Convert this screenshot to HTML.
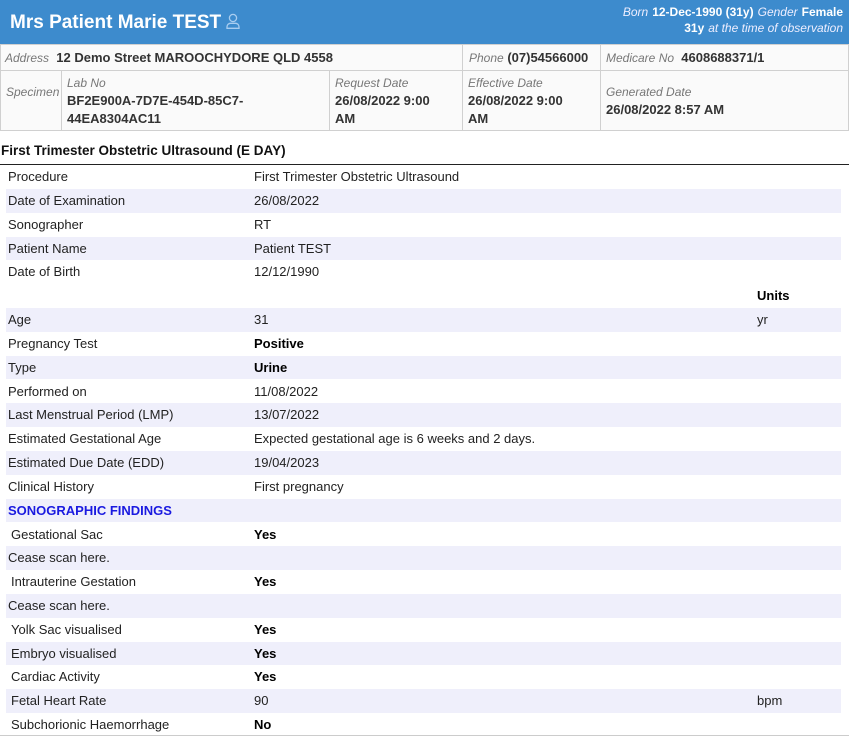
<!DOCTYPE html>
<html><head><meta charset="utf-8"><style>
*{margin:0;padding:0;box-sizing:border-box}
body{width:849px;height:736px;overflow:hidden;background:#fff;font-family:"Liberation Sans",sans-serif;color:#222;font-size:13px;position:relative}
.hdr{position:absolute;left:0;top:0;width:849px;height:44px;background:#3d8bcd;color:#fff}
.name{position:absolute;left:10px;top:12px;font-size:19px;font-weight:bold}
.r1{position:absolute;right:6px;top:4px;font-size:12px;text-align:right;line-height:16px}
.r1 i{font-weight:normal;color:#eef}
.r1 b{margin:0 4px}
.cell{position:absolute;border:1px solid #d0d0d0;background:#fafafa;font-size:13px;color:#333}
.cell i{color:#777;font-size:12px}
.cell b{color:#333}
.h2{position:absolute;left:1px;top:143px;font-size:13.5px;font-weight:bold;color:#111}
.line{position:absolute;left:0;top:164px;width:849px;height:1px;background:#222}
.row{position:absolute;left:6px;width:835px;height:23.83px;line-height:23px}
.row.s{background:#efeffb}
.row span{position:absolute;top:0}
.l{left:2px}.v{left:248px}.u{left:751px}
.bl{font-weight:bold;color:#000}
.sono{color:#1a1ae0;font-weight:bold}
</style></head><body>
<div class="hdr">
<div class="name">Mrs Patient Marie TEST <svg width="14" height="16" viewBox="0 0 14 16" style="vertical-align:-1px"><circle cx="7" cy="5" r="3.6" fill="none" stroke="#a9cdf0" stroke-width="1.3"/><path d="M1 15.3v-1.5a3.5 3.5 0 0 1 3.5-3.5h5a3.5 3.5 0 0 1 3.5 3.5v1.5z" fill="none" stroke="#a9cdf0" stroke-width="1.3"/></svg></div>
<div class="r1"><i>Born</i><b>12-Dec-1990 (31y)</b><i>Gender</i><b style="margin-right:0">Female</b><br><b>31y</b><i>at the time of observation</i></div>
</div>
<div class="cell" style="left:0;top:44px;width:463px;height:27px;padding:5px 4px"><i>Address</i> <b>&nbsp;12 Demo Street MAROOCHYDORE QLD 4558</b></div>
<div class="cell" style="left:462px;top:44px;width:139px;height:27px;padding:5px 6px"><i>Phone</i> <b>(07)54566000</b></div>
<div class="cell" style="left:600px;top:44px;width:249px;height:27px;padding:5px 5px"><i>Medicare No</i> <b>&nbsp;4608688371/1</b></div>
<div class="cell" style="left:0;top:70px;width:62px;height:61px;padding:13px 5px"><i>Specimen</i></div>
<div class="cell" style="left:61px;top:70px;width:269px;height:61px;padding:3px 5px;line-height:18px"><i>Lab No</i><br><b>BF2E900A-7D7E-454D-85C7-<br>44EA8304AC11</b></div>
<div class="cell" style="left:329px;top:70px;width:134px;height:61px;padding:3px 5px;line-height:18px"><i>Request Date</i><br><b>26/08/2022 9:00<br>AM</b></div>
<div class="cell" style="left:462px;top:70px;width:139px;height:61px;padding:3px 5px;line-height:18px"><i>Effective Date</i><br><b>26/08/2022 9:00<br>AM</b></div>
<div class="cell" style="left:600px;top:70px;width:249px;height:61px;padding:12px 5px;line-height:18px"><i>Generated Date</i><br><b>26/08/2022 8:57 AM</b></div>
<div class="h2">First Trimester Obstetric Ultrasound (E DAY)</div>
<div class="line"></div>

<div class="row" style="top:165px"><span class="l">Procedure</span><span class="v">First Trimester Obstetric Ultrasound</span></div>
<div class="row s" style="top:188.8px"><span class="l">Date of Examination</span><span class="v">26/08/2022</span></div>
<div class="row" style="top:212.7px"><span class="l">Sonographer</span><span class="v">RT</span></div>
<div class="row s" style="top:236.5px"><span class="l">Patient Name</span><span class="v">Patient TEST</span></div>
<div class="row" style="top:260.3px"><span class="l">Date of Birth</span><span class="v">12/12/1990</span></div>
<div class="row" style="top:284.2px"><span class="u bl">Units</span></div>
<div class="row s" style="top:308px"><span class="l">Age</span><span class="v">31</span><span class="u">yr</span></div>
<div class="row" style="top:331.8px"><span class="l">Pregnancy Test</span><span class="v bl">Positive</span></div>
<div class="row s" style="top:355.6px"><span class="l">Type</span><span class="v bl">Urine</span></div>
<div class="row" style="top:379.5px"><span class="l">Performed on</span><span class="v">11/08/2022</span></div>
<div class="row s" style="top:403.3px"><span class="l">Last Menstrual Period (LMP)</span><span class="v">13/07/2022</span></div>
<div class="row" style="top:427.1px"><span class="l">Estimated Gestational Age</span><span class="v">Expected gestational age is 6 weeks and 2 days.</span></div>
<div class="row s" style="top:451px"><span class="l">Estimated Due Date (EDD)</span><span class="v">19/04/2023</span></div>
<div class="row" style="top:474.8px"><span class="l">Clinical History</span><span class="v">First pregnancy</span></div>
<div class="row s" style="top:498.6px"><span class="l sono">SONOGRAPHIC FINDINGS</span></div>
<div class="row" style="top:522.5px"><span class="l" style="left:5px">Gestational Sac</span><span class="v bl">Yes</span></div>
<div class="row s" style="top:546.3px"><span class="l">Cease scan here.</span></div>
<div class="row" style="top:570.1px"><span class="l" style="left:5px">Intrauterine Gestation</span><span class="v bl">Yes</span></div>
<div class="row s" style="top:594px"><span class="l">Cease scan here.</span></div>
<div class="row" style="top:617.8px"><span class="l" style="left:5px">Yolk Sac visualised</span><span class="v bl">Yes</span></div>
<div class="row s" style="top:641.6px"><span class="l" style="left:5px">Embryo visualised</span><span class="v bl">Yes</span></div>
<div class="row" style="top:665.4px"><span class="l" style="left:5px">Cardiac Activity</span><span class="v bl">Yes</span></div>
<div class="row s" style="top:689.3px"><span class="l" style="left:5px">Fetal Heart Rate</span><span class="v">90</span><span class="u">bpm</span></div>
<div class="row" style="top:713.1px"><span class="l" style="left:5px">Subchorionic Haemorrhage</span><span class="v bl">No</span></div>
<div style="position:absolute;left:0;top:735px;width:849px;height:1px;background:#ccc"></div>
</body></html>
